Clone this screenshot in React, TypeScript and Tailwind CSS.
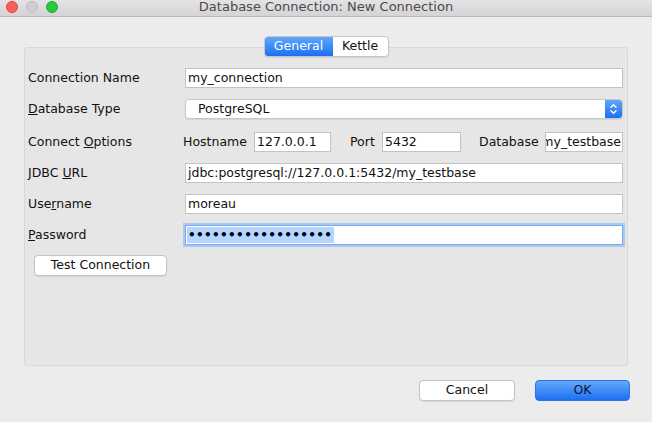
import React from "react";

const font = { fontFamily: '"DejaVu Sans", "Liberation Sans", sans-serif' };

function Field({ value, className = "" }: { value: string; className?: string }) {
  return (
    <div
      className={`h-[20px] bg-white border border-[#c3c3c3] flex items-center px-[2px] text-[12.5px] text-[#111] overflow-hidden whitespace-nowrap ${className}`}
    >
      {value}
    </div>
  );
}

function Label({ children, className = "" }: { children: React.ReactNode; className?: string }) {
  return <div className={`text-[12.5px] text-[#111] whitespace-nowrap ${className}`}>{children}</div>;
}

export default function App() {
  return (
    <div className="w-[652px] h-[422px] bg-[#ececec] flex flex-col overflow-hidden" style={font}>
      {/* Title bar */}
      <div className="h-[17px] shrink-0 bg-gradient-to-b from-[#e4e2e4] to-[#d5d3d5] border-b border-[#b9b9b9] flex items-center relative">
        <div className="flex items-center gap-[8px] pl-[6px] -mt-[3px]">
          <div className="w-[12px] h-[12px] rounded-full bg-[#fc5f57] border border-[#e0443e]" />
          <div className="w-[12px] h-[12px] rounded-full bg-[#d0ced0] border border-[#bdbbbd]" />
          <div className="w-[12px] h-[12px] rounded-full bg-[#2bc840] border border-[#1aab29]" />
        </div>
        <div className="flex-1 text-center text-[13px] text-[#4a4a4a] -ml-[58px] -mt-[2px]">
          Database Connection: New Connection
        </div>
      </div>

      {/* Body */}
      <div className="flex flex-col px-[24px] pt-[19px]">
        <div className="flex justify-center relative z-10">
          <div className="flex h-[21px] rounded-[4px] overflow-hidden border border-[#c6c6c6] bg-white text-[12.5px] shadow-[0_1px_1px_rgba(0,0,0,0.08)]">
            <div className="w-[68px] flex items-center justify-center text-white bg-gradient-to-b from-[#5ea6fb] to-[#1b6ff1]">
              General
            </div>
            <div className="w-[55px] flex items-center justify-center text-[#111]">Kettle</div>
          </div>
        </div>
        <div className="-mt-[10px] h-[319px] w-[604px] bg-[#e6e6e6] border border-[#d8d8d8] rounded-[3px] flex flex-col pt-[20px] pl-[3px] pr-[4px]">
          {/* Connection name */}
          <div className="flex items-center h-[20px]">
            <Label className="w-[157px]">Connection Name</Label>
            <Field value="my_connection" className="flex-1 pl-[2px]" />
          </div>
          {/* Database type */}
          <div className="flex items-center h-[20px] mt-[11px]">
            <Label className="w-[157px]">
              <span className="underline">D</span>atabase Type
            </Label>
            <div className="flex-1 h-[20px] bg-white border border-[#c8c8c8] rounded-[4px] flex items-center overflow-hidden shadow-[0_1px_1px_rgba(0,0,0,0.08)]">
              <div className="flex-1 text-[12.5px] text-[#111] pl-[12px]">PostgreSQL</div>
              <div className="w-[17px] h-full bg-gradient-to-b from-[#5ea6fb] to-[#1b6ff1] flex items-center justify-center">
                <svg width="9" height="14" viewBox="0 0 9 14" fill="none" stroke="white" strokeWidth="1.4" strokeLinecap="round" strokeLinejoin="round">
                  <path d="M2 5.2 L4.5 2.8 L7 5.2" />
                  <path d="M2 8.8 L4.5 11.2 L7 8.8" />
                </svg>
              </div>
            </div>
          </div>
          {/* Connect options */}
          <div className="flex items-center h-[20px] mt-[13px]">
            <Label className="w-[155px]">
              Connect <span className="underline">O</span>ptions
            </Label>
            <Label className="w-[71px]">Hostname</Label>
            <Field value="127.0.0.1" className="w-[77px] pl-[2px]" />
            <Label className="ml-[19px] w-[32px]">Port</Label>
            <Field value="5432" className="w-[79px] pl-[2px]" />
            <Label className="ml-[18px] w-[66px]">Database</Label>
            <div className="flex-1 h-[20px] bg-white border border-[#c3c3c3] flex items-center justify-end overflow-hidden whitespace-nowrap text-[12.5px] text-[#111] pr-[1px]">
              my_testbase
            </div>
          </div>
          {/* JDBC URL */}
          <div className="flex items-center h-[20px] mt-[11px]">
            <Label className="w-[157px]">
              JDBC <span className="underline">U</span>RL
            </Label>
            <Field value="jdbc:postgresql://127.0.0.1:5432/my_testbase" className="flex-1 pl-[2px]" />
          </div>
          {/* Username */}
          <div className="flex items-center h-[20px] mt-[11px]">
            <Label className="w-[157px]">
              Use<span className="underline">r</span>name
            </Label>
            <Field value="moreau" className="flex-1 pl-[2px]" />
          </div>
          {/* Password */}
          <div className="flex items-center h-[20px] mt-[11px]">
            <Label className="w-[157px]">
              <span className="underline">P</span>assword
            </Label>
            <div className="flex-1 h-[20px] bg-white border border-[#7da9ea] shadow-[0_0_0_2px_#a9c9f3] flex items-stretch p-[1px] overflow-hidden">
              <div className="bg-[#b4d5fe] text-[12px] leading-[16px] text-black pl-[1px] pr-[2px] tracking-[0.35px] whitespace-nowrap font-bold">
                ••••••••••••••••••
              </div>
            </div>
          </div>
          {/* Test Connection */}
          <div className="mt-[10px] pl-[6px]">
            <div className="w-[133px] h-[21px] bg-white border border-[#c3c3c3] rounded-[4px] flex items-center justify-center text-[12.5px] text-[#111] shadow-[0_1px_1px_rgba(0,0,0,0.08)]">
              Test Connection
            </div>
          </div>
        </div>
        {/* Buttons */}
        <div className="flex justify-end gap-[20px] mt-[14px] -mr-[2px]">
          <div className="w-[96px] h-[21px] bg-white border border-[#c3c3c3] rounded-[4px] flex items-center justify-center text-[12.5px] text-[#111] shadow-[0_1px_1px_rgba(0,0,0,0.08)]">
            Cancel
          </div>
          <div className="w-[95px] h-[21px] rounded-[4px] flex items-center justify-center text-[12.5px] text-[#0d1530] bg-gradient-to-b from-[#63a8fb] to-[#1a6ff0] border border-[#2a74e6]">
            OK
          </div>
        </div>
      </div>
    </div>
  );
}
